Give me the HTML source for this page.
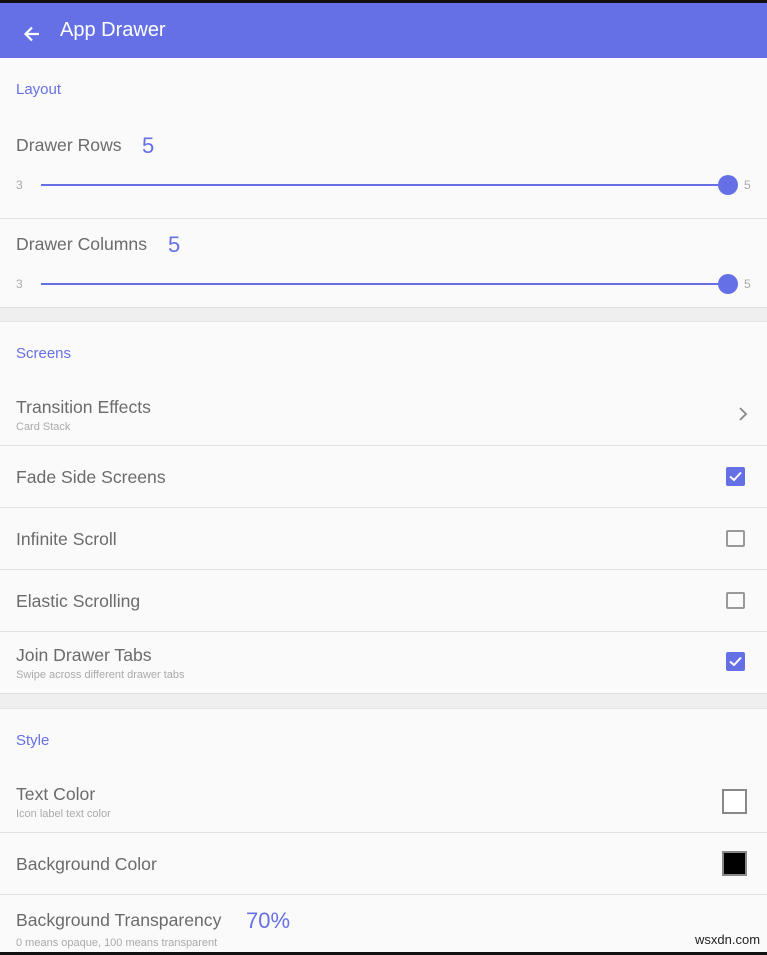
<!DOCTYPE html><html><head><style>
body{margin:0;width:767px;height:955px;overflow:hidden;background:#fafafa;font-family:"Liberation Sans",sans-serif;position:relative}
.a{position:absolute}
.t{position:absolute;left:16px;font-size:17.6px;color:#6b6b6b}
.s{position:absolute;left:16px;font-size:11px;color:#aaa}
.h{position:absolute;left:16px;font-size:15px;color:#6670e6}
.d{position:absolute;left:0;width:767px;height:1px;background:#e2e2e2}
.g{position:absolute;left:0;width:767px;background:#efefef;border-top:1px solid #ddd;border-bottom:1px solid #e4e4e4}
.cb{position:absolute;left:726px;width:16px;height:16px;border:2px solid #999;border-radius:2px;box-sizing:border-box}
.cc{position:absolute;left:726px;width:19px;height:19px;background:#6670e6;border-radius:2px}
.n{position:absolute;font-size:12px;color:#aaa}
.v{position:absolute;font-size:22px;color:#6670e6}
</style></head><body>
<div class="a" style="top:0;left:0;width:767px;height:3px;background:#111"></div>
<div class="a" style="top:3px;left:0;width:767px;height:55px;background:#6670e6"></div>
<svg class="a" style="left:22px;top:24px" width="20" height="20" viewBox="0 0 20 20"><path d="M17 10H4M10 3.5L3.5 10L10 16.5" stroke="#fff" stroke-width="2.2" fill="none"/></svg>
<div class="a" style="left:60px;top:19px;font-size:20px;color:#fff">App Drawer</div>
<div class="h" style="top:81px">Layout</div>
<div class="t" style="top:135px">Drawer Rows</div><div class="v" style="left:142px;top:133px">5</div>
<div class="n" style="left:16px;top:178px">3</div><div class="a" style="left:41px;top:184px;width:687px;height:2px;background:#6670e6"></div><div class="a" style="left:718px;top:175px;width:20px;height:20px;border-radius:50%;background:#6670e6"></div><div class="n" style="left:744px;top:178px">5</div>
<div class="d" style="top:218px"></div>
<div class="t" style="top:234px">Drawer Columns</div><div class="v" style="left:168px;top:232px">5</div>
<div class="n" style="left:16px;top:277px">3</div><div class="a" style="left:41px;top:283px;width:687px;height:2px;background:#6670e6"></div><div class="a" style="left:718px;top:274px;width:20px;height:20px;border-radius:50%;background:#6670e6"></div><div class="n" style="left:744px;top:277px">5</div>
<div class="g" style="top:307px;height:13px"></div>
<div class="h" style="top:345px">Screens</div>
<div class="t" style="top:397px">Transition Effects</div><div class="s" style="top:421px">Card Stack</div>
<svg class="a" style="left:738px;top:406px" width="10" height="16"><path d="M2 2L8 8L2 14" stroke="#888" stroke-width="1.8" fill="none"/></svg>
<div class="d" style="top:445px"></div>
<div class="t" style="top:467px">Fade Side Screens</div>
<div class="cc" style="top:467px"><svg width="19" height="19"><path d="M4 9.5L8 13L15 5.5" stroke="#fff" stroke-width="2" fill="none"/></svg></div>
<div class="d" style="top:507px"></div>
<div class="t" style="top:529px">Infinite Scroll</div><div class="cb" style="top:530px;width:19px;height:17px"></div>
<div class="d" style="top:569px"></div>
<div class="t" style="top:591px">Elastic Scrolling</div><div class="cb" style="top:592px;width:19px;height:17px"></div>
<div class="d" style="top:631px"></div>
<div class="t" style="top:645px">Join Drawer Tabs</div><div class="s" style="top:669px">Swipe across different drawer tabs</div>
<div class="cc" style="top:652px"><svg width="19" height="19"><path d="M4 9.5L8 13L15 5.5" stroke="#fff" stroke-width="2" fill="none"/></svg></div>
<div class="g" style="top:693px;height:14px"></div>
<div class="h" style="top:732px">Style</div>
<div class="t" style="top:784px">Text Color</div><div class="s" style="top:808px">Icon label text color</div>
<div class="a" style="left:722px;top:789px;width:25px;height:25px;border:2px solid #888;box-sizing:border-box;background:#fff"></div>
<div class="d" style="top:832px"></div>
<div class="t" style="top:854px">Background Color</div>
<div class="a" style="left:722px;top:851px;width:25px;height:25px;border:2px solid #888;box-sizing:border-box;background:#000"></div>
<div class="d" style="top:894px"></div>
<div class="t" style="top:910px">Background Transparency</div><div class="v" style="left:246px;top:908px">70%</div>
<div class="s" style="top:937px">0 means opaque, 100 means transparent</div>
<div class="a" style="left:695px;top:932px;font-size:13px;color:#222">wsxdn.com</div>
<div class="a" style="top:952px;left:0;width:767px;height:3px;background:#111"></div>
</body></html>
